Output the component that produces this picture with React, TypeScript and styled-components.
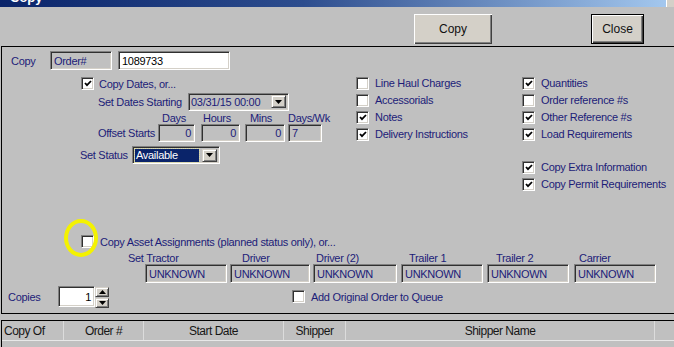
import React from "react";
import styled, { createGlobalStyle } from "styled-components";

const GlobalStyle = createGlobalStyle`
  html, body { margin: 0; padding: 0; background: #c0c0c0; }
  body { font-family: "Liberation Sans", Arial, sans-serif; }
`;

const Window = styled.div`
  position: relative;
  width: 674px;
  height: 347px;
  overflow: hidden;
  background: #c0c0c0;
  font-family: "Liberation Sans", Arial, sans-serif;
  font-size: 11px;
  letter-spacing: -0.3px;
  color: #1c1c78;
`;

const TitleBar = styled.div`
  height: 7px;
  display: flex;
  align-items: flex-start;
  overflow: hidden;
  background: linear-gradient(to right, #0a246a 0%, #2d4d8e 45%, #a6caf0 100%);
`;

const TitleText = styled.span`
  margin: -9px 0 0 10px;
  font-size: 13px;
  line-height: 13px;
  font-weight: bold;
  color: #fff;
  letter-spacing: 0;
`;

const TitleClose = styled.span`
  margin: -8px -10px 0 auto;
  width: 16px;
  height: 14px;
  background: #d4d0c8;
  border: 1px solid #fff;
  border-right-color: #404040;
  border-bottom-color: #404040;
`;

const ButtonBar = styled.div`
  height: 39px;
  display: flex;
  align-items: flex-start;
`;

const Button = styled.button<{ $w: number; $ml: number; $default?: boolean }>`
  margin: 7px 0 0 ${(p) => p.$ml}px;
  width: ${(p) => p.$w}px;
  height: 30px;
  padding: 0;
  box-sizing: border-box;
  background: #d4d0c8;
  font-family: "Liberation Sans", Arial, sans-serif;
  font-size: 12px;
  color: #111;
  border: ${(p) => (p.$default ? "1px solid #000" : "none")};
  box-shadow: inset 1px 1px 0 #fff, inset -1px -1px 0 #404040, inset -2px -2px 0 #808080;
`;

const Panel = styled.div`
  position: relative;
  margin-left: 1px;
  height: 266px;
  border-top: 1px solid #000;
  border-left: 1px solid #000;
  border-bottom: 1px solid #000;
`;

const Row = styled.div<{ $mt?: number; $ml?: number; $h?: number }>`
  display: flex;
  align-items: center;
  margin-top: ${(p) => p.$mt ?? 0}px;
  padding-left: ${(p) => p.$ml ?? 0}px;
  height: ${(p) => p.$h ?? 13}px;
`;

const Label = styled.span<{ $w?: number }>`
  ${(p) => (p.$w ? `width: ${p.$w}px; flex: none;` : "")}
  white-space: nowrap;
`;

const Field = styled.div<{ $w: number; $h?: number; $bg?: string; $right?: boolean; $ml?: number; $color?: string }>`
  width: ${(p) => p.$w}px;
  height: ${(p) => p.$h ?? 19}px;
  margin-left: ${(p) => p.$ml ?? 0}px;
  flex: none;
  box-sizing: border-box;
  display: flex;
  align-items: center;
  justify-content: ${(p) => (p.$right ? "flex-end" : "flex-start")};
  padding: 0 3px;
  background: ${(p) => p.$bg ?? "#c0c0c0"};
  color: ${(p) => p.$color ?? "#1c1c78"};
  border-top: 1px solid #808080;
  border-left: 1px solid #808080;
  border-right: 1px solid #fff;
  border-bottom: 1px solid #fff;
  box-shadow: inset 1px 1px 0 #303030, inset -1px -1px 0 #d4d0c8;
`;

const Combo = styled(Field)`
  padding: 0 2px 0 2px;
  justify-content: space-between;
`;

const Highlight = styled.span`
  flex: 1;
  height: 13px;
  margin-right: 3px;
  padding-left: 1px;
  background: #0a246a;
  color: #fff;
  outline: 1px dotted #e0e0a0;
  line-height: 13px;
`;

const ArrowBtn = styled.span<{ $h?: number }>`
  width: 15px;
  height: ${(p) => p.$h ?? 13}px;
  flex: none;
  box-sizing: border-box;
  background: #d4d0c8;
  border-top: 1px solid #d4d0c8;
  border-left: 1px solid #d4d0c8;
  border-right: 1px solid #404040;
  border-bottom: 1px solid #404040;
  box-shadow: inset 1px 1px 0 #fff, inset -1px -1px 0 #808080;
  display: flex;
  align-items: center;
  justify-content: center;
`;

const Arrow = ({ up }: { up?: boolean }) => (
  <svg width="7" height="4" viewBox="0 0 7 4">
    <polygon points={up ? "0,4 7,4 3.5,0" : "0,0 7,0 3.5,4"} fill="#000" />
  </svg>
);

const CheckBox = styled.span`
  width: 13px;
  height: 13px;
  flex: none;
  box-sizing: border-box;
  background: #fff;
  border-top: 1px solid #808080;
  border-left: 1px solid #808080;
  border-right: 1px solid #fff;
  border-bottom: 1px solid #fff;
  box-shadow: inset 1px 1px 0 #303030, inset -1px -1px 0 #d4d0c8;
  display: flex;
  align-items: center;
  justify-content: center;
`;

const Check = ({ checked, label, gap = 6 }: { checked?: boolean; label: string; gap?: number }) => (
  <>
    <CheckBox>
      {checked && (
        <svg width="8" height="7" viewBox="0 0 8 7">
          <polyline points="1,3 3,5.2 7,1" fill="none" stroke="#000" strokeWidth="1.8" />
        </svg>
      )}
    </CheckBox>
    <Label style={{ marginLeft: gap }}>{label}</Label>
  </>
);

const Upper = styled.div`
  display: flex;
  height: 158px;
  margin-top: 7px;
`;

const Col = styled.div<{ $ml?: number; $w?: number }>`
  display: flex;
  flex-direction: column;
  margin-left: ${(p) => p.$ml ?? 0}px;
  ${(p) => (p.$w ? `width: ${p.$w}px;` : "")}
`;

const CheckRow = styled.div<{ $mt?: number }>`
  display: flex;
  align-items: center;
  height: 17px;
  margin-top: ${(p) => p.$mt ?? 0}px;
  & > span { margin-top: -5px; }
`;

const HeadCell = styled.span<{ $w: number; $ml?: number; $pl?: number }>`
  width: ${(p) => p.$w}px;
  margin-left: ${(p) => p.$ml ?? 0}px;
  padding-left: ${(p) => p.$pl ?? 0}px;
  box-sizing: border-box;
  flex: none;
  white-space: nowrap;
`;

const AssetRow = styled.div`
  display: flex;
  margin: 4px 0 0 143px;
`;

const AssetCol = styled.div<{ $w: number; $ml: number }>`
  display: flex;
  flex-direction: column;
  width: ${(p) => p.$w}px;
  margin-left: ${(p) => p.$ml}px;
`;

const AssetLabel = styled.span<{ $off: number }>`
  height: 12px;
  line-height: 12px;
  margin-left: ${(p) => p.$off}px;
  white-space: nowrap;
`;

const Spinner = styled.div`
  display: flex;
  width: 51px;
  height: 21px;
  flex: none;
`;

const SpinBtns = styled.div`
  display: flex;
  flex-direction: column;
  width: 14px;
  & > span { width: 14px; height: 10px; margin-top: 1px; }
`;

const Ring = styled.div`
  position: absolute;
  left: 62px;
  top: 172px;
  width: 34px;
  height: 38px;
  box-sizing: border-box;
  border: 4px solid #f4f200;
  border-radius: 50%;
`;

const Grid = styled.div`
  margin: 6px 0 0 1px;
  border-top: 1px solid #000;
  border-left: 1px solid #000;
  height: 40px;
`;

const GridHead = styled.div`
  display: flex;
  height: 19px;
  border-bottom: 1px solid #e8e8e8;
  font-family: "Liberation Sans", Arial, sans-serif;
  font-size: 12px;
  letter-spacing: -0.5px;
  color: #161616;
`;

const GridCell = styled.div<{ $w: number; $left?: boolean }>`
  width: ${(p) => p.$w}px;
  flex: none;
  box-sizing: border-box;
  border-right: 1px solid #dcdcdc;
  display: flex;
  align-items: center;
  justify-content: ${(p) => (p.$left ? "flex-start" : "center")};
  padding-left: ${(p) => (p.$left ? 2 : 0)}px;
  white-space: nowrap;
  overflow: hidden;
`;

const assets = [
  { label: "Set Tractor", w: 82, ml: 0, off: -17 },
  { label: "Driver", w: 80, ml: 3, off: 12 },
  { label: "Driver (2)", w: 84, ml: 3, off: 3 },
  { label: "Trailer 1", w: 82, ml: 4, off: 8 },
  { label: "Trailer 2", w: 82, ml: 4, off: 9 },
  { label: "Carrier", w: 82, ml: 5, off: 5 },
];

const columns = [
  { label: "Copy Of", w: 62, left: true },
  { label: "Order #", w: 80 },
  { label: "Start Date", w: 140 },
  { label: "Shipper", w: 62 },
  { label: "Shipper Name", w: 309 },
  { label: "Delivery Date", w: 130 },
];

export default function App() {
  return (
    <Window>
      <GlobalStyle />
      <TitleBar>
        <TitleText>Copy</TitleText>
        <TitleClose />
      </TitleBar>
      <ButtonBar>
        <Button $w={78} $ml={414}>Copy</Button>
        <Button $w={53} $ml={99} $default>Close</Button>
      </ButtonBar>

      <Panel>
        <Row $mt={4} $ml={9} $h={19}>
          <Label $w={39}>Copy</Label>
          <Field $w={62}>Order#</Field>
          <Field $w={112} $ml={6} $bg="#fff" $color="#000">1089733</Field>
        </Row>

        <Upper>
          <Col $ml={78} $w={276}>
            <Row $ml={1}>
              <Check checked label="Copy Dates, or..." gap={5} />
            </Row>
            <Row $mt={3} $ml={18} $h={17}>
              <Label $w={90}>Set Dates Starting</Label>
              <Combo $w={101} $h={18}>
                <span>03/31/15 00:00</span>
                <ArrowBtn>
                  <Arrow />
                </ArrowBtn>
              </Combo>
            </Row>
            <Row $mt={1} $ml={78} $h={13}>
              <HeadCell $w={37} $pl={4}>Days</HeadCell>
              <HeadCell $w={39} $ml={6} $pl={2}>Hours</HeadCell>
              <HeadCell $w={40} $ml={5} $pl={5}>Mins</HeadCell>
              <HeadCell $w={34} $ml={3}>Days/Wk</HeadCell>
            </Row>
            <Row $ml={18} $h={18}>
              <Label $w={60}>Offset Starts</Label>
              <Field $w={37} $h={18} $right>0</Field>
              <Field $w={39} $h={18} $ml={6} $right>0</Field>
              <Field $w={40} $h={18} $ml={5} $right>0</Field>
              <Field $w={34} $h={18} $ml={3}>7</Field>
            </Row>
            <Row $mt={4} $h={18}>
              <Label $w={52}>Set Status</Label>
              <Combo $w={88} $h={18}>
                <Highlight>Available</Highlight>
                <ArrowBtn>
                  <Arrow />
                </ArrowBtn>
              </Combo>
            </Row>
          </Col>

          <Col $w={166}>
            <CheckRow><Check label="Line Haul Charges" /></CheckRow>
            <CheckRow><Check label="Accessorials" /></CheckRow>
            <CheckRow><Check checked label="Notes" /></CheckRow>
            <CheckRow><Check checked label="Delivery Instructions" /></CheckRow>
          </Col>

          <Col>
            <CheckRow><Check checked label="Quantities" /></CheckRow>
            <CheckRow><Check label="Order reference #s" /></CheckRow>
            <CheckRow><Check checked label="Other Reference #s" /></CheckRow>
            <CheckRow><Check checked label="Load Requirements" /></CheckRow>
            <CheckRow $mt={16}><Check checked label="Copy Extra Information" /></CheckRow>
            <CheckRow><Check checked label="Copy Permit Requirements" /></CheckRow>
          </Col>
        </Upper>

        <Row $ml={79}>
          <Check label="Copy Asset Assignments (planned status only), or..." />
        </Row>

        <AssetRow>
          {assets.map((a) => (
            <AssetCol key={a.label} $w={a.w} $ml={a.ml}>
              <AssetLabel $off={a.off}>{a.label}</AssetLabel>
              <Field $w={a.w}>UNKNOWN</Field>
            </AssetCol>
          ))}
        </AssetRow>

        <Row $mt={3} $ml={6} $h={21}>
          <Label $w={50}>Copies</Label>
          <Spinner>
            <Field $w={37} $h={21} $bg="#fff" $color="#000" $right>1</Field>
            <SpinBtns>
              <ArrowBtn><Arrow up /></ArrowBtn>
              <ArrowBtn><Arrow /></ArrowBtn>
            </SpinBtns>
          </Spinner>
          <span style={{ width: 183, flex: "none" }} />
          <Check label="Add Original Order to Queue" />
        </Row>

        <Ring />
      </Panel>

      <Grid>
        <GridHead>
          {columns.map((c) => (
            <GridCell key={c.label} $w={c.w} $left={c.left}>
              {c.label}
            </GridCell>
          ))}
        </GridHead>
      </Grid>
    </Window>
  );
}
